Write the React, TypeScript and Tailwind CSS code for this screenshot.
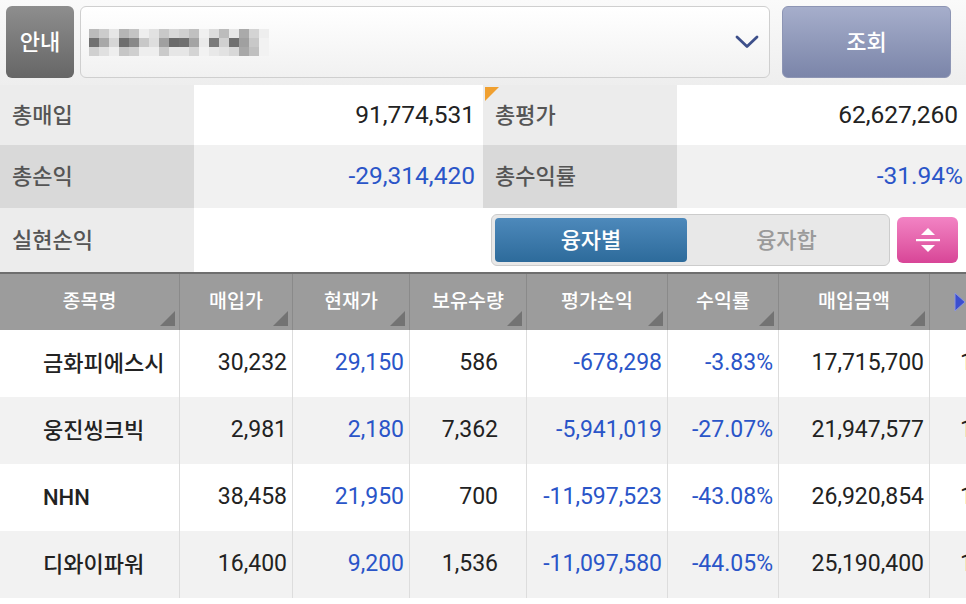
const font = "font-['Roboto','Noto_Sans_CJK_KR',sans-serif]";

const columns = ['종목명', '매입가', '현재가', '보유수량', '평가손익', '수익률', '매입금액'];

const rows = [
  { name: '금화피에스시', buy: '30,232', cur: '29,150', qty: '586', pl: '-678,298', rate: '-3.83%', amt: '17,715,700' },
  { name: '웅진씽크빅', buy: '2,981', cur: '2,180', qty: '7,362', pl: '-5,941,019', rate: '-27.07%', amt: '21,947,577' },
  { name: 'NHN', buy: '38,458', cur: '21,950', qty: '700', pl: '-11,597,523', rate: '-43.08%', amt: '26,920,854' },
  { name: '디와이파워', buy: '16,400', cur: '9,200', qty: '1,536', pl: '-11,097,580', rate: '-44.05%', amt: '25,190,400' },
];

// blurred account name, drawn as a mosaic
const mosaic = [
  ['#bbb', '#ccc', '#e6e6e6', '#b5b5b5', '#c4c4c4', '#eee', '#e2e2e2', '#c8c8c8', '#d8d8d8', '#d0d0d0', '#c0c0c0', '#f0f0f0', '#ddd', '#bcbcbc', '#e8e8e8', '#aaa', '#d4d4d4', '#eee'],
  ['#707070', '#a8a8a8', '#d6d6d6', '#6e6e6e', '#888', '#c8c8c8', '#dedede', '#a0a0a0', '#6a6a6a', '#707070', '#a4a4a4', '#eaeaea', '#7a7a7a', '#d0d0d0', '#707070', '#a0a0a0', '#c8c8c8', '#f2f2f2'],
  ['#d0d0d0', '#e0e0e0', '#eee', '#c6c6c6', '#cfcfcf', '#eee', '#eee', '#cacaca', '#e6e6e6', '#e6e6e6', '#d4d4d4', '#f2f2f2', '#e8e8e8', '#e2e2e2', '#d8d8d8', '#a8a8a8', '#c0c0c0', '#f2f2f2'],
];

const widths = [180, 113, 117, 117, 141, 111, 151];

function SortMark() {
  return (
    <div className="absolute right-[4px] bottom-[4px] w-0 h-0 border-b-[15px] border-b-[#737373] border-l-[15px] border-l-transparent" />
  );
}

export default function App() {
  return (
    <div className={`${font} w-[966px] h-[604px] overflow-hidden bg-white`}>
      {/* Top bar */}
      <div className="h-[85px] flex gap-[6px] px-[6px] pt-[6px] pb-[7px] bg-gradient-to-b from-[#fafafa] to-[#eeeeee]">
        <button className="w-[68px] h-[72px] rounded-[6px] bg-gradient-to-b from-[#8e8e8e] to-[#666666] text-white text-[22px] font-medium">
          안내
        </button>
        <div className="w-[690px] h-[72px] rounded-[6px] border border-[#cfcfcf] bg-gradient-to-b from-white to-[#f1f1f1] flex items-center pl-[8px] pr-[10px]">
          <div className="flex flex-col blur-[0.6px]">
            {mosaic.map((line, i) => (
              <div key={i} className="flex">
                {line.map((c, j) => (
                  <div key={j} className="w-[10px] h-[9px]" style={{ backgroundColor: c }} />
                ))}
              </div>
            ))}
          </div>
          <div className="flex-1" />
          <svg width="24" height="14" viewBox="0 0 24 14">
            <polyline points="2,2 12,11.5 22,2" fill="none" stroke="#3d4f8a" strokeWidth="2.8" strokeLinecap="round" strokeLinejoin="round" />
          </svg>
        </div>
        <button className="ml-[6px] w-[169px] h-[72px] rounded-[6px] bg-gradient-to-b from-[#a6aecb] to-[#7b85a9] border border-[#8d95b4] text-white text-[22px] font-medium">
          조회
        </button>
      </div>

      {/* Summary */}
      <div className="grid grid-cols-[194px_289px_194px_289px] text-[22px]">
        <div className="h-[60px] bg-[#ececec] flex items-center pl-[12px] text-[#555] font-medium">총매입</div>
        <div className="h-[60px] bg-white flex items-center justify-end pr-[8px] text-[#222] text-[24.5px]">91,774,531</div>
        <div className="relative h-[60px] bg-[#ececec] flex items-center pl-[12px] text-[#555] font-medium">
          <div className="absolute left-[2px] top-[2px] w-0 h-0 border-t-[14px] border-t-[#f0a030] border-r-[14px] border-r-transparent" />
          총평가
        </div>
        <div className="h-[60px] bg-white flex items-center justify-end pr-[8px] text-[#222] text-[24.5px]">62,627,260</div>

        <div className="h-[63px] bg-[#d9d9d9] flex items-center pl-[12px] text-[#555] font-medium">총손익</div>
        <div className="h-[63px] bg-[#f1f1f1] flex items-center justify-end pr-[8px] text-[#2a55c8] text-[24.5px]">-29,314,420</div>
        <div className="h-[63px] bg-[#d9d9d9] flex items-center pl-[12px] text-[#555] font-medium">총수익률</div>
        <div className="h-[63px] bg-[#f1f1f1] flex items-center justify-end pr-[3px] text-[#2a55c8] text-[24.5px]">-31.94%</div>

        <div className="h-[64px] bg-[#ececec] flex items-center pl-[12px] text-[#555] font-medium">실현손익</div>
        <div className="h-[64px] bg-white" />
        <div className="col-span-2 h-[64px] bg-white flex items-center pl-[8px] gap-[7px]">
          <div className="w-[399px] h-[52px] rounded-[6px] border border-[#cccccc] bg-[#e8e8e8] flex items-center p-[3px]">
            <div className="w-[192px] h-[44px] rounded-[4px] bg-gradient-to-b from-[#4d89bb] to-[#2d6b9b] flex items-center justify-center text-white text-[22px] font-medium">
              융자별
            </div>
            <div className="flex-1 flex items-center justify-center text-[#9a9a9a] text-[22px] font-medium">융자합</div>
          </div>
          <div className="w-[61px] h-[46px] rounded-[6px] bg-gradient-to-b from-[#f283c4] to-[#d84597] flex items-center justify-center">
            <svg width="26" height="26" viewBox="0 0 26 26">
              <polygon points="13,1 20,8 6,8" fill="white" />
              <rect x="1" y="12" width="24" height="2.2" fill="white" />
              <polygon points="6,18 20,18 13,25" fill="white" />
            </svg>
          </div>
        </div>
      </div>

      {/* Table header */}
      <div className="flex h-[58px] bg-[#9c9c9c] border-t-[2px] border-t-[#6e6e6e] text-white text-[19.5px] font-medium">
        {columns.map((c, i) => (
          <div
            key={c}
            className="relative shrink-0 border-r border-r-[#8a8a8a] flex items-center justify-center"
            style={{ width: widths[i] }}
          >
            {c}
            <SortMark />
          </div>
        ))}
        <div className="flex-1 flex items-center justify-end">
          <svg width="12" height="20" viewBox="0 0 12 20">
            <polygon points="1,1 11,10 1,19" fill="#3b4fd0" stroke="#8b95e0" strokeWidth="1" />
          </svg>
        </div>
      </div>

      {/* Rows */}
      {rows.map((r, i) => (
        <div
          key={r.name}
          className={`flex h-[67px] text-[23px] ${i % 2 === 1 ? 'bg-[#f2f2f2]' : 'bg-white'}`}
        >
          <div className="w-[180px] shrink-0 border-r border-r-[#dddddd] flex items-center pl-[43px] text-[22px] text-[#222] font-medium">
            {r.name}
          </div>
          <div className="w-[113px] shrink-0 border-r border-r-[#dddddd] flex items-center justify-end pr-[5px] text-[#222]">{r.buy}</div>
          <div className="w-[117px] shrink-0 border-r border-r-[#dddddd] flex items-center justify-end pr-[5px] text-[#2a55c8]">{r.cur}</div>
          <div className="w-[117px] shrink-0 border-r border-r-[#dddddd] flex items-center justify-end pr-[28px] text-[#222]">{r.qty}</div>
          <div className="w-[141px] shrink-0 border-r border-r-[#dddddd] flex items-center justify-end pr-[5px] text-[#2a55c8]">{r.pl}</div>
          <div className="w-[111px] shrink-0 border-r border-r-[#dddddd] flex items-center justify-end pr-[5px] text-[#2a55c8]">{r.rate}</div>
          <div className="w-[151px] shrink-0 border-r border-r-[#dddddd] flex items-center justify-end pr-[5px] text-[#222]">{r.amt}</div>
          <div className="flex-1 flex items-center pl-[30px] text-[#222] overflow-hidden whitespace-nowrap">1</div>
        </div>
      ))}
    </div>
  );
}
